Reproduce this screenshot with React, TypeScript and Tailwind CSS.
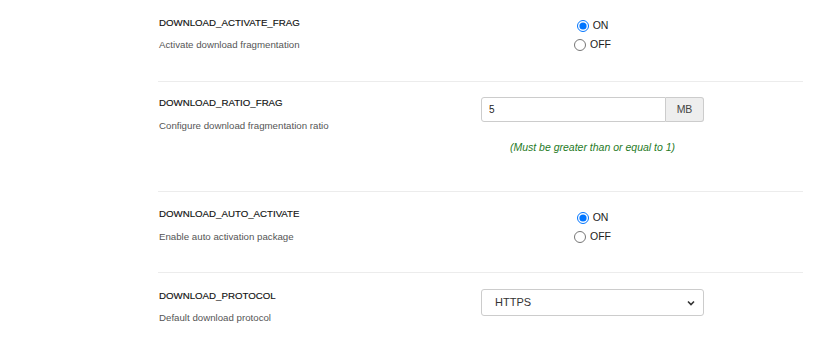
import React from "react";

const font = { fontFamily: '"Liberation Sans", Arial, sans-serif' };

function Label({ title, desc, pt, gap }: { title: string; desc: string; pt: string; gap: string }) {
  return (
    <div className={pt}>
      <div className="text-[9.7px] leading-[14px] font-normal text-[#111] [-webkit-text-stroke:0.15px_#111]">{title}</div>
      <div className={`${gap} text-[9.7px] leading-[14px] text-[#555]`}>{desc}</div>
    </div>
  );
}

function Radios({ name, pt }: { name: string; pt: string }) {
  return (
    <div className={`${pt} flex flex-col items-center`}>
      <label className="flex items-center h-[19px] gap-[4px] text-[10.5px] text-[#222]">
        <input type="radio" name={name} defaultChecked className="m-0 w-[12px] h-[12px]" />
        <span>ON</span>
      </label>
      <label className="flex items-center h-[19px] gap-[4px] text-[10.5px] text-[#222]">
        <input type="radio" name={name} className="m-0 w-[12px] h-[12px]" />
        <span>OFF</span>
      </label>
    </div>
  );
}

export default function App() {
  return (
    <div className="w-[828px] h-[347px] bg-white overflow-hidden" style={font}>
      <div className="ml-[158px] w-[645px]">
        <div className="grid grid-cols-[323px_223px_1fr] h-[82px] border-b border-[#ececec]">
          <Label title="DOWNLOAD_ACTIVATE_FRAG" desc="Activate download fragmentation" pt="pt-[16px] pl-[1px]" gap="mt-[8px]" />
          <Radios name="frag" pt="pt-[16px]" />
          <div />
        </div>
        <div className="grid grid-cols-[323px_223px_1fr] h-[110px] border-b border-[#ececec]">
          <Label title="DOWNLOAD_RATIO_FRAG" desc="Configure download fragmentation ratio" pt="pt-[14px] pl-[1px]" gap="mt-[9px]" />
          <div className="pt-[15px]">
            <div className="flex h-[25px]">
              <input
                defaultValue="5"
                className="flex-1 min-w-0 border border-[#cccccc] rounded-l-[3px] px-[7px] text-[10px] text-[#222] outline-none"
                style={font}
              />
              <div className="w-[38px] flex items-center justify-center bg-[#eeeeee] border border-l-0 border-[#cccccc] rounded-r-[3px] text-[10.5px] text-[#444]">
                MB
              </div>
            </div>
            <div className="mt-[19px] text-center italic text-[10.5px] leading-[12px] text-[#1f7a1f]">
              (Must be greater than or equal to 1)
            </div>
          </div>
          <div />
        </div>
        <div className="grid grid-cols-[323px_223px_1fr] h-[81px] border-b border-[#ececec]">
          <Label title="DOWNLOAD_AUTO_ACTIVATE" desc="Enable auto activation package" pt="pt-[15px] pl-[1px]" gap="mt-[9px]" />
          <Radios name="auto" pt="pt-[16px]" />
          <div />
        </div>
        <div className="grid grid-cols-[323px_223px_1fr] h-[74px]">
          <Label title="DOWNLOAD_PROTOCOL" desc="Default download protocol" pt="pt-[16px] pl-[1px]" gap="mt-[8px]" />
          <div className="pt-[16px]">
            <div className="relative h-[27px] border border-[#cccccc] rounded-[3px] bg-white flex items-center">
              <span className="pl-[13px] text-[11px] text-[#333]">HTTPS</span>
              <svg className="absolute right-[8px] top-[10px]" width="8" height="6" viewBox="0 0 8 6">
                <path d="M1 1.5 L4 4.5 L7 1.5" fill="none" stroke="#333" strokeWidth="1.6" />
              </svg>
            </div>
          </div>
          <div />
        </div>
      </div>
    </div>
  );
}
